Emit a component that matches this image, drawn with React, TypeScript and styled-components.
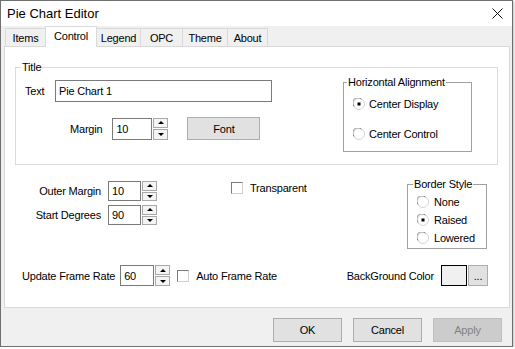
import React, { FC } from 'react'
import styled, { createGlobalStyle } from 'styled-components'

const GlobalStyle = createGlobalStyle`
  html, body {
    margin: 0;
    padding: 0;
    background: #ffffff;
  }
  body {
    font-family: "Liberation Sans", Arial, sans-serif;
    font-size: 11px;
    letter-spacing: -0.2px;
    color: #000;
  }
  * {
    box-sizing: border-box;
  }
`

const TABS = [
  { label: 'Items', width: 41 },
  { label: 'Control', width: 52, active: true },
  { label: 'Legend', width: 45 },
  { label: 'OPC', width: 43 },
  { label: 'Theme', width: 46 },
  { label: 'About', width: 41 },
]

const CloseIcon: FC = () => (
  <svg width="11" height="11" viewBox="0 0 11 11">
    <path d="M0.5 0.5 L10.5 10.5 M10.5 0.5 L0.5 10.5" stroke="#111" strokeWidth="1" />
  </svg>
)

const RadioMark: FC<{ checked?: boolean }> = ({ checked }) => (
  <svg width="12" height="12" viewBox="0 0 12 12">
    <circle cx="6" cy="6" r="5.5" fill="#fff" stroke="#d6d6d6" />
    <path d="M1.2 8.5 A5 5 0 0 1 8.5 1.2" fill="none" stroke="#8a8a8a" strokeWidth="1" />
    {checked && <rect x="4.5" y="4.5" width="3" height="3" fill="#000" />}
  </svg>
)

const Spin: FC<{ value: string; width: number; height: number; ml?: number }> = ({ value, width, height, ml }) => (
  <SpinWrap $ml={ml ?? 0}>
    <SpinInput $w={width} $h={height}>{value}</SpinInput>
    <SpinButtons $h={height}>
      <SpinHalf>
        <ArrowUp />
      </SpinHalf>
      <SpinHalf>
        <ArrowDown />
      </SpinHalf>
    </SpinButtons>
  </SpinWrap>
)

const Radio: FC<{ label: string; checked?: boolean; gap: number }> = ({ label, checked, gap }) => (
  <RadioRow $gap={gap}>
    <RadioMark checked={checked} />
    <span>{label}</span>
  </RadioRow>
)

const Check: FC<{ label: string }> = ({ label }) => (
  <CheckRow>
    <CheckBox />
    <span>{label}</span>
  </CheckRow>
)

export default function App() {
  return (
    <>
      <GlobalStyle />
      <Window>
        <TitleBar>
          <span>Pie Chart Editor</span>
          <CloseIcon />
        </TitleBar>
        <Body>
          <TabStrip>
            {TABS.map(t => (
              <Tab key={t.label} $w={t.width} $active={!!t.active}>
                {t.label}
              </Tab>
            ))}
          </TabStrip>
          <Panel>
            <TitleGroup>
              <TitleLegend>Title</TitleLegend>
              <TitleBody>
                <LeftCol>
                  <TextRow>
                    <TextLabel>Text</TextLabel>
                    <TextInput>Pie Chart 1</TextInput>
                  </TextRow>
                  <MarginRow>
                    <span>Margin</span>
                    <Spin value="10" width={40} height={22} ml={10} />
                    <PushButton $w={73} $h={23} $ml={19}>Font</PushButton>
                  </MarginRow>
                </LeftCol>
                <AlignGroup>
                  <SmallLegend $ml={3}>Horizontal Alignment</SmallLegend>
                  <AlignBody>
                    <Radio label="Center Display" checked gap={4} />
                    <Radio label="Center Control" gap={4} />
                  </AlignBody>
                </AlignGroup>
              </TitleBody>
            </TitleGroup>

            <MidSection>
              <SpinCol>
                <FieldRow>
                  <FieldLabel>Outer Margin</FieldLabel>
                  <Spin value="10" width={33} height={20} />
                </FieldRow>
                <FieldRow>
                  <FieldLabel>Start Degrees</FieldLabel>
                  <Spin value="90" width={33} height={20} />
                </FieldRow>
              </SpinCol>
              <TransparentSlot>
                <Check label="Transparent" />
              </TransparentSlot>
              <BorderGroup>
                <SmallLegend $ml={5}>Border Style</SmallLegend>
                <BorderBody>
                  <Radio label="None" gap={5} />
                  <Radio label="Raised" checked gap={5} />
                  <Radio label="Lowered" gap={5} />
                </BorderBody>
              </BorderGroup>
            </MidSection>

            <BottomRow>
              <span>Update Frame Rate</span>
              <Spin value="60" width={34} height={21} ml={5} />
              <AutoSlot>
                <Check label="Auto Frame Rate" />
              </AutoSlot>
              <Spacer />
              <span>BackGround Color</span>
              <Swatch />
              <PushButton $w={20} $h={21} $ml={1}>...</PushButton>
            </BottomRow>
          </Panel>
          <ButtonBar>
            <PushButton $w={69} $h={24}>OK</PushButton>
            <PushButton $w={69} $h={24}>Cancel</PushButton>
            <PushButton $w={69} $h={24} $disabled>Apply</PushButton>
          </ButtonBar>
        </Body>
      </Window>
    </>
  )
}

const Window = styled.div`
  width: 513px;
  height: 347px;
  border: 1px solid #6f6f6f;
  background: #f0f0f0;
  display: flex;
  flex-direction: column;
  box-shadow: 1px 1px 2px rgba(0, 0, 0, 0.25);
`

const TitleBar = styled.div`
  height: 25px;
  background: #fff;
  display: flex;
  align-items: center;
  justify-content: space-between;
  padding: 0 9px 1px 6px;
  font-size: 13px;
  letter-spacing: 0;
`

const Body = styled.div`
  flex: 1;
  display: flex;
  flex-direction: column;
  padding: 0 2px 0 3px;
`

const TabStrip = styled.div`
  height: 20px;
  display: flex;
  align-items: flex-end;
  padding-left: 1px;
`

const Tab = styled.div<{ $w: number; $active: boolean }>`
  width: ${p => p.$w}px;
  height: ${p => (p.$active ? 21 : 18)}px;
  margin-left: -1px;
  margin-bottom: ${p => (p.$active ? -1 : 0)}px;
  border: 1px solid #d9d9d9;
  border-bottom: none;
  background: ${p => (p.$active ? '#fff' : '#f0f0f0')};
  position: relative;
  z-index: ${p => (p.$active ? 1 : 0)};
  display: flex;
  justify-content: center;
  padding-top: 3px;
  &:first-child {
    margin-left: 0;
  }
`

const Panel = styled.div`
  width: 506px;
  height: 262px;
  background: #fff;
  border: 1px solid #d9d9d9;
  display: flex;
  flex-direction: column;
`

const TitleGroup = styled.fieldset`
  margin: 14px 0 0 10px;
  width: 483px;
  padding: 0;
  border: 1px solid #dcdcdc;
  min-width: 0;
`

const TitleLegend = styled.legend`
  margin-left: 5px;
  padding: 0 1px;
  line-height: 13px;
`

const TitleBody = styled.div`
  height: 90px;
  display: flex;
  align-items: flex-start;
`

const LeftCol = styled.div`
  padding: 6px 0 0 9px;
  display: flex;
  flex-direction: column;
`

const TextRow = styled.div`
  display: flex;
  align-items: center;
`

const TextLabel = styled.span`
  width: 30px;
`

const TextInput = styled.div`
  width: 217px;
  height: 22px;
  border: 1px solid #7a7a7a;
  padding-left: 3px;
  display: flex;
  align-items: center;
`

const MarginRow = styled.div`
  margin-top: 15px;
  padding-left: 45px;
  display: flex;
  align-items: center;
`

const SpinWrap = styled.div<{ $ml: number }>`
  margin-left: ${p => p.$ml}px;
  display: flex;
  gap: 1px;
`

const SpinInput = styled.div<{ $w: number; $h: number }>`
  width: ${p => p.$w}px;
  height: ${p => p.$h}px;
  border: 1px solid #7a7a7a;
  padding-left: 3px;
  display: flex;
  align-items: center;
`

const SpinButtons = styled.div<{ $h: number }>`
  width: 15px;
  height: ${p => p.$h}px;
  display: flex;
  flex-direction: column;
  gap: 1px;
`

const SpinHalf = styled.div`
  flex: 1;
  border: 1px solid #a8a8a8;
  background: #f4f4f4;
  display: flex;
  align-items: center;
  justify-content: center;
`

const ArrowUp = styled.span`
  width: 0;
  height: 0;
  border-left: 3px solid transparent;
  border-right: 3px solid transparent;
  border-bottom: 3px solid #000;
`

const ArrowDown = styled.span`
  width: 0;
  height: 0;
  border-left: 3px solid transparent;
  border-right: 3px solid transparent;
  border-top: 3px solid #000;
`

const PushButton = styled.div<{ $w: number; $h: number; $ml?: number; $disabled?: boolean }>`
  width: ${p => p.$w}px;
  height: ${p => p.$h}px;
  margin-left: ${p => p.$ml ?? 0}px;
  border: 1px solid ${p => (p.$disabled ? '#bfbfbf' : '#adadad')};
  background: ${p => (p.$disabled ? '#cccccc' : '#e1e1e1')};
  color: ${p => (p.$disabled ? '#838383' : '#000')};
  display: flex;
  align-items: center;
  justify-content: center;
`

const AlignGroup = styled.fieldset`
  margin: 2px 25px 0 auto;
  width: 129px;
  padding: 0;
  border: 1px solid #a0a0a0;
  min-width: 0;
`

const SmallLegend = styled.legend<{ $ml: number }>`
  margin-left: ${p => p.$ml}px;
  padding: 0 1px;
  line-height: 13px;
`

const AlignBody = styled.div`
  height: 62px;
  padding: 6px 0 0 9px;
  display: flex;
  flex-direction: column;
  gap: 12px;
`

const RadioRow = styled.div<{ $gap: number }>`
  height: 18px;
  display: flex;
  align-items: center;
  gap: ${p => p.$gap}px;
`

const CheckRow = styled.div`
  display: flex;
  align-items: center;
  gap: 7px;
`

const CheckBox = styled.span`
  width: 12px;
  height: 12px;
  border: 1px solid;
  border-color: #7b7b7b #d0d0d0 #d0d0d0 #7b7b7b;
  background: #fff;
`

const MidSection = styled.div`
  margin-top: 13px;
  display: flex;
  align-items: flex-start;
`

const SpinCol = styled.div`
  margin-top: 3px;
  display: flex;
  flex-direction: column;
  gap: 4px;
`

const FieldRow = styled.div`
  display: flex;
  align-items: center;
`

const FieldLabel = styled.span`
  width: 96px;
  margin-right: 7px;
  text-align: right;
`

const TransparentSlot = styled.div`
  margin: 4px 0 0 74px;
`

const BorderGroup = styled.fieldset`
  margin: 0 22px 0 auto;
  width: 80px;
  padding: 0;
  border: 1px solid #a0a0a0;
  min-width: 0;
`

const BorderBody = styled.div`
  height: 57px;
  padding: 2px 0 0 9px;
  display: flex;
  flex-direction: column;
`

const BottomRow = styled.div`
  margin-top: 16px;
  padding: 0 21px 0 17px;
  height: 21px;
  display: flex;
  align-items: center;
`

const AutoSlot = styled.div`
  margin-left: 7px;
`

const Spacer = styled.div`
  flex: 1;
`

const Swatch = styled.div`
  width: 26px;
  height: 21px;
  margin-left: 7px;
  border: 1px solid #000;
  background: #f0f0f0;
`

const ButtonBar = styled.div`
  flex: 1;
  display: flex;
  justify-content: flex-end;
  align-items: flex-start;
  gap: 11px;
  padding: 10px 8px 0 0;
`
